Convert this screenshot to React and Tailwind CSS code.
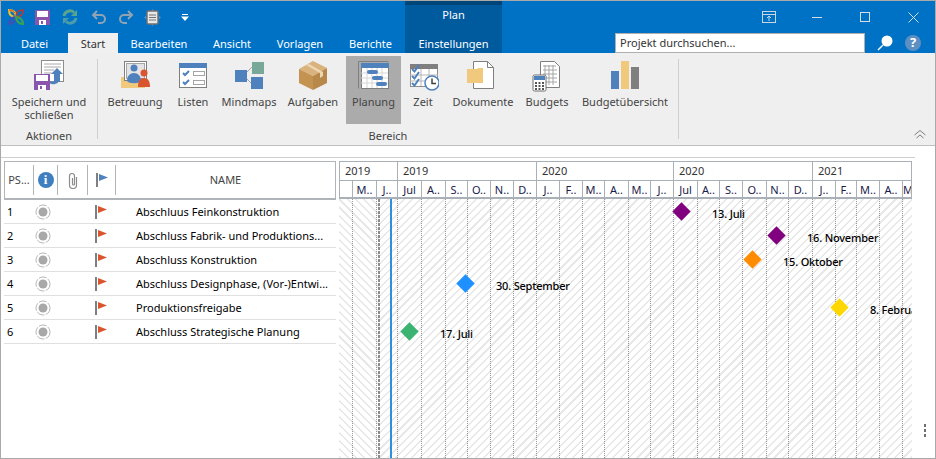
import React from 'react';

const tabs = [
  { label: 'Datei', w: 'w-[67px]' },
  { label: 'Start', w: 'w-[50px]', active: true },
  { label: 'Bearbeiten', w: 'w-[82px]' },
  { label: 'Ansicht', w: 'w-[64px]' },
  { label: 'Vorlagen', w: 'w-[72px]' },
  { label: 'Berichte', w: 'w-[69px]' },
];

const rows = [
  'Abschluus Feinkonstruktion',
  'Abschluss Fabrik- und Produktions...',
  'Abschluss Konstruktion',
  'Abschluss Designphase, (Vor-)Entwi...',
  'Produktionsfreigabe',
  'Abschluss Strategische Planung',
];

const months = ['', 'M..', 'J..', 'Jul', 'A..', 'S..', 'O..', 'N..', 'D..', 'J..', 'F..', 'M..', 'A..', 'M..', 'J..', 'Jul', 'A..', 'S..', 'O..', 'N..', 'D..', 'J..', 'F..', 'M..', 'A..', 'M..'];
const monthCols = 'grid-cols-[13px_24px_21px_24px_24px_22px_23px_23px_23px_23px_23px_22px_24px_22px_23px_24px_22px_23px_24px_22px_24px_23px_21px_23px_23px_10px]';

const milestones = [
  { d: 'left-[336px] top-[6px] bg-[#800080]', l: 'left-[373px] top-[8px]', text: '13. Juli' },
  { d: 'left-[431px] top-[30px] bg-[#800080]', l: 'left-[468px] top-[32px]', text: '16. November' },
  { d: 'left-[407px] top-[54px] bg-[#ff8c00]', l: 'left-[444px] top-[56px]', text: '15. Oktober' },
  { d: 'left-[120px] top-[78px] bg-[#1e90ff]', l: 'left-[157px] top-[80px]', text: '30. September' },
  { d: 'left-[494px] top-[102px] bg-[#ffd700]', l: 'left-[531px] top-[104px]', text: '8. Februar' },
  { d: 'left-[64px] top-[126px] bg-[#3cb371]', l: 'left-[101px] top-[128px]', text: '17. Juli' },
];

const Logo = () => (
  <svg width="18" height="18" viewBox="0 0 18 18" fill="none">
    <path d="M2 2c5 0 7 3 7 7-4 0-7-2-7-7z" stroke="#f2c230" strokeWidth="2" />
    <path d="M2 2c3 0 5 1 6 3" stroke="#d9482b" strokeWidth="1" />
    <path d="M16 2c0 5-3 7-7 7 0-4 2-7 7-7z" stroke="#c0392b" strokeWidth="1.500" />
    <path d="M2 16c0-4 3-7 7-7 0 4-3 7-7 7z" stroke="#3f51b5" strokeWidth="2" />
    <path d="M16 16c-4 0-7-3-7-7 4 0 7 3 7 7z" stroke="#3fa34d" strokeWidth="2" />
  </svg>
);

const SaveSmall = () => (
  <svg width="15" height="15" viewBox="0 0 15 15">
    <rect width="15" height="15" fill="#8a55ad" />
    <rect x="2" y="1" width="11" height="6" fill="#fff" />
    <rect x="4" y="10" width="7" height="5" fill="#fff" />
    <rect x="6" y="11" width="2" height="3" fill="#8a55ad" />
  </svg>
);

const Sync = () => (
  <svg width="16" height="16" viewBox="0 0 16 16" fill="none">
    <path d="M2 7a6 6 0 0 1 10-3.500" stroke="#5aa58c" strokeWidth="3" />
    <path d="M15 1v6H9z" fill="#5aa58c" />
    <path d="M14 9a6 6 0 0 1-10 3.500" stroke="#4d9ca8" strokeWidth="3" />
    <path d="M1 15V9h6z" fill="#4d9ca8" />
  </svg>
);

const Undo = ({ flip }) => (
  <svg width="15" height="14" viewBox="0 0 15 14" fill="none" className={flip ? '-scale-x-100' : ''}>
    <path d="M2 5h8a4 4 0 0 1 0 8H7" stroke="#8fa3b3" strokeWidth="2" />
    <path d="M6 1 2 5l4 4" stroke="#8fa3b3" strokeWidth="2" />
  </svg>
);

const DocSmall = () => (
  <svg width="17" height="17" viewBox="0 0 17 17" fill="none">
    <path d="M0 8.500 2 7v3zM17 8.500 15 7v3zM8.500 0 7 2h3zM8.500 17 7 15h3z" fill="#5a95c8" />
    <rect x="3" y="2" width="11" height="13" rx="1" fill="#e8e8e8" stroke="#707070" strokeWidth="1.500" />
    <path d="M5 6h7M5 8.500h7M5 11h7" stroke="#707070" />
  </svg>
);

const SaveClose = () => (
  <svg width="32" height="32" viewBox="0 0 32 32" fill="none">
    <rect x="8.500" y="0.500" width="22" height="21" fill="#fff" stroke="#8c8c8c" />
    <path d="M11 4h17M11 7h17M11 10h10M11 13h8" stroke="#a8a8a8" />
    <path d="M24 8l6 6h-3v8h-6v-8h-3z" fill="#4f81bd" />
    <path d="M17 22c3 2 7 1 8-2" stroke="#4f81bd" strokeWidth="2.500" />
    <rect x="1" y="14" width="16" height="16" fill="#8a55ad" />
    <rect x="3" y="15" width="12" height="6" fill="#fff" />
    <rect x="5" y="25" width="8" height="5" fill="#fff" />
    <rect x="7" y="26" width="2" height="3" fill="#8a55ad" />
  </svg>
);

const Care = () => (
  <svg width="32" height="32" viewBox="0 0 32 32" fill="none">
    <path d="M2 17h4v-1h20v12H2z" fill="#f0c97c" />
    <rect x="5.500" y="1.500" width="22" height="19" fill="#fff" stroke="#7f7f7f" />
    <rect x="7.500" y="3.500" width="18" height="15" fill="#e4e4e4" stroke="#a5a5a5" />
    <circle cx="15" cy="8" r="3.500" fill="#4f81bd" />
    <path d="M8 21c0-5 3-8 7-8s7 3 7 8c-2 3-12 3-14 0z" fill="#4f81bd" />
    <circle cx="25" cy="13" r="3.500" fill="#d9552f" />
    <path d="M19 27c0-6 2-9 6-9s6 3 6 9z" fill="#d9552f" />
  </svg>
);

const Lists = () => (
  <svg width="32" height="32" viewBox="0 0 32 32" fill="none">
    <rect x="2.500" y="3.500" width="27" height="24" fill="#fff" stroke="#7f7f7f" />
    <rect x="2" y="3" width="28" height="5" fill="#4f81bd" />
    <rect x="16.500" y="11.500" width="11" height="4" stroke="#a5a5a5" />
    <rect x="16.500" y="20.500" width="11" height="4" stroke="#a5a5a5" />
    <path d="M6 13l2 2 4-4M6 22l2 2 4-4" stroke="#4f81bd" strokeWidth="2" />
  </svg>
);

const Mindmap = () => (
  <svg width="32" height="32" viewBox="0 0 32 32" fill="none">
    <path d="M14 12l5-5M14 19l4 4" stroke="#a5a5a5" />
    <rect x="19" y="2" width="12" height="12" fill="#78a898" />
    <rect x="2" y="10" width="12" height="12" fill="#4f81bd" />
    <rect x="18" y="17" width="12" height="12" fill="#4f81bd" />
  </svg>
);

const Box = () => (
  <svg width="32" height="32" viewBox="0 0 32 32">
    <path d="M2 9 16 1l14 7-14 8z" fill="#d9b27c" />
    <path d="M2 9l14 7v14L2 23z" fill="#c49352" />
    <path d="M30 8 16 16v14l14-7z" fill="#b8874a" />
    <path d="m9 5 14 8v5l3-2v-4L12 4z" fill="#ecd7b4" />
  </svg>
);

const Gantt = () => (
  <svg width="32" height="32" viewBox="0 0 32 32" fill="none">
    <path d="M.500 28.500V1.500h30" stroke="#7f7f7f" />
    <rect x="3.500" y="3.500" width="27" height="25" fill="#fff" stroke="#7f7f7f" />
    <path d="M9 8v20M14 8v20M19 8v20M24 8v20M3 13h27M3 18h27M3 23h27" stroke="#d5d5d5" />
    <rect x="3" y="3" width="28" height="5" fill="#4f81bd" />
    <rect x="9" y="10" width="11" height="4" rx="2" fill="#4f81bd" />
    <rect x="14" y="16" width="11" height="4" rx="2" fill="#4f81bd" />
    <rect x="18" y="22" width="11" height="4" rx="2" fill="#4f81bd" />
  </svg>
);

const Time = () => (
  <svg width="32" height="32" viewBox="0 0 32 32" fill="none">
    <rect x="3.500" y="4.500" width="27" height="22" fill="#fff" stroke="#8c8c8c" />
    <rect x="3" y="4" width="28" height="5" fill="#7f7f7f" />
    <path d="M14 9v17M22 9v17M3 15h28M3 21h28" stroke="#b5b5b5" />
    <path d="M5 9l2.500 2.500L12 5M5 16l2.500 2.500L12 12M5 23l2.500 2.500L12 19" stroke="#4f81bd" strokeWidth="2" />
    <circle cx="25" cy="23" r="7" fill="#fff" stroke="#4f81bd" strokeWidth="1.500" />
    <path d="M25 18.500V23.500h4" stroke="#404040" strokeWidth="1.500" />
  </svg>
);

const Docs = () => (
  <svg width="32" height="32" viewBox="0 0 32 32" fill="none">
    <path d="M6.500 1.500h14l6 6v21h-20z" fill="#fff" stroke="#7f7f7f" />
    <path d="M20.500 1.500v6h6" stroke="#7f7f7f" />
    <path d="M0 9h10l1-1h5v15H0z" fill="#f0c97c" />
  </svg>
);

const Budget = () => (
  <svg width="32" height="32" viewBox="0 0 32 32" fill="none">
    <path d="M9.500 1.500h14l5 5v21h-19z" fill="#fff" stroke="#7f7f7f" />
    <path d="M12 6h13M12 10h14M12 14h14M12 18h14M12 22h14M14 5v20M18 5v20M22 5v20" stroke="#a5a5a5" />
    <rect x="2" y="15" width="13" height="16" rx="1.500" fill="#fff" stroke="#6e6e6e" />
    <rect x="3" y="16" width="11" height="4" fill="#4f81bd" />
    <path d="M4 23h2M7.500 23h2M11 23h2M4 26h2M7.500 26h2M11 26h2M4 29h2M7.500 29h2M11 29h2" stroke="#555" strokeWidth="2" />
  </svg>
);

const Bars = () => (
  <svg width="32" height="32" viewBox="0 0 32 32">
    <rect x="2" y="11" width="8" height="18" fill="#4f81bd" />
    <rect x="12" y="1" width="8" height="28" fill="#f0c97c" />
    <rect x="22" y="7" width="8" height="22" fill="#7f7f7f" />
  </svg>
);

const buttons = [
  { label: 'Betreuung', icon: Care, cls: 'w-[62px] ml-[6px]' },
  { label: 'Listen', icon: Lists, cls: 'w-[52px] ml-[1px]' },
  { label: 'Mindmaps', icon: Mindmap, cls: 'w-[60px]' },
  { label: 'Aufgaben', icon: Box, cls: 'w-[58px] ml-[5px]' },
  { label: 'Planung', icon: Gantt, cls: 'w-[55px] ml-[4px] bg-[#ababab]' },
  { label: 'Zeit', icon: Time, cls: 'w-[44px]' },
  { label: 'Dokumente', icon: Docs, cls: 'w-[64px] ml-[6px]' },
  { label: 'Budgets', icon: Budget, cls: 'w-[52px] ml-[6px]' },
  { label: 'Budgetübersicht', icon: Bars, cls: 'w-[94px] ml-[5px]' },
];

const RibbonButton = ({ label, icon: Icon, cls }) => (
  <div className={`h-[68px] shrink-0 flex flex-col items-center pt-[4px] ${cls}`}>
    <Icon />
    <div className="mt-[3px] leading-[13px] text-center whitespace-pre">{label}</div>
  </div>
);

const Radio = () => (
  <svg width="16" height="16" viewBox="0 0 16 16" fill="none">
    <circle cx="8" cy="8" r="7" stroke="#b5b5b5" strokeDasharray="8 1.500" />
    <circle cx="8" cy="8" r="4.500" fill="#a8a8a8" />
  </svg>
);

const Flag = ({ color }) => (
  <svg width="14" height="15" viewBox="0 0 14 15">
    <rect x="0" y="0" width="2" height="14" fill="#7f7f7f" />
    <path d="M3 1l9 3.500L3 8z" fill={color} />
  </svg>
);

export default function App() {
  return (
    <div className="w-[936px] h-[459px] flex flex-col overflow-hidden border border-[#a9a9a9] bg-white text-[11px] text-[#444] font-['Noto_Sans','Liberation_Sans',sans-serif]">
      {/* title bar + tabs */}
      <div className="flex h-[52px] shrink-0 bg-[#0072c6] text-white">
        <div className="w-[404px] shrink-0 flex flex-col">
          <div className="h-[32px] flex items-center pl-[6px]">
            <div className="w-[26px]"><Logo /></div>
            <div className="w-[28px] pl-[2px]"><SaveSmall /></div>
            <div className="w-[28px] pl-[1px]"><Sync /></div>
            <div className="w-[28px] pl-[2px]"><Undo /></div>
            <div className="w-[27px] pl-[2px]"><Undo flip /></div>
            <div className="w-[37px]"><DocSmall /></div>
            <svg width="8" height="7" viewBox="0 0 8 7" fill="#fff"><path d="M1 0h6v1H1zM0 2.500h8L4 7z" /></svg>
          </div>
          <div className="h-[20px] flex">
            {tabs.map(t => (
              <div
                key={t.label}
                className={`flex justify-center pt-[3px] ${t.w} ${t.active ? 'bg-[#f0f0f0] text-[#333]' : ''}`}
              >
                {t.label}
              </div>
            ))}
          </div>
        </div>

        <div className="w-[97px] shrink-0 flex flex-col items-center bg-[#005a9e] border-t-4 border-[#004578]">
          <div className="h-[28px] pt-[2px]">Plan</div>
          <div className="pt-[3px]">Einstellungen</div>
        </div>

        <div className="flex-1 flex flex-col">
          <div className="h-[32px] flex items-center pl-[260px]">
            <svg width="14" height="13" viewBox="0 0 14 13" fill="none" stroke="#c8d6e2">
              <rect x=".5" y=".5" width="13" height="11" />
              <path d="M0 3.500h14M7 10V5M5 7l2-2 2 2" />
            </svg>
            <div className="ml-[36px] w-[10px] h-px bg-[#d5dee6]" />
            <div className="ml-[38px] w-[10px] h-[10px] border border-[#d5dee6]" />
            <svg className="ml-[38px]" width="11" height="11" viewBox="0 0 11 11" stroke="#d5dee6"><path d="M.5.5l10 10M10.500.500l-10 10" /></svg>
          </div>
          <div className="h-[20px] flex items-center pl-[113px]">
            <div className="w-[250px] h-[20px] bg-white border border-[#b0b0b0] pl-[4px] leading-[17px] text-[#333]">Projekt durchsuchen...</div>
            <svg className="ml-[12px]" width="16" height="18" viewBox="0 0 16 18" fill="none">
              <circle cx="10" cy="7" r="5.500" fill="#fff" />
              <path d="M6 11l-5 5" stroke="#fff" strokeWidth="1.500" />
            </svg>
            <div className="ml-[12px] w-[16px] h-[16px] rounded-full bg-[#5d8fc2] flex items-center justify-center font-bold text-[13px] text-white">?</div>
          </div>
        </div>
      </div>

      {/* ribbon */}
      <div className="flex h-[93px] shrink-0 bg-[#efefef] border-b border-[#bfbfbf]">
        <div className="w-[96px] shrink-0 flex flex-col items-center pt-[3px]">
          <RibbonButton label={'Speichern und\nschließen'} icon={SaveClose} cls="w-[90px]" />
          <div className="mt-[5px] leading-[14px]">Aktionen</div>
        </div>
        <div className="w-px h-[80px] mt-[6px] bg-[#d0d0d0]" />
        <div className="w-[580px] shrink-0 flex flex-col pt-[3px]">
          <div className="flex">
            {buttons.map(b => <RibbonButton key={b.label} {...b} />)}
          </div>
          <div className="mt-[5px] text-center leading-[14px]">Bereich</div>
        </div>
        <div className="w-px h-[80px] mt-[6px] bg-[#d0d0d0]" />
        <div className="flex-1 flex items-end justify-end pr-[9px] pb-[6px]">
          <svg width="12" height="9" viewBox="0 0 12 9" fill="none" stroke="#7f7f7f"><path d="M.5 5 6 .5 11.500 5M2.500 8 6 5l3.500 3" /></svg>
        </div>
      </div>

      <div className="h-[11px] shrink-0" />
      <div className="h-px w-[914px] shrink-0 bg-[#cfcfcf]" />

      {/* table + chart */}
      <div className="flex-1 min-h-0 flex pt-[3px] pl-[3px]">
        <div className="w-[332px] shrink-0 mr-[3px]">
          <div className="h-[39px] flex items-stretch border border-b-2 border-[#b0b4b8] text-[#444]">
            <div className="w-[29px] my-[3px] border-r border-[#b0b4b8] flex items-center justify-center">PS...</div>
            <div className="w-[24px] my-[3px] border-r border-[#b0b4b8] flex items-center justify-center">
              <div className="w-[16px] h-[16px] rounded-full bg-[#3f7fbf] flex items-center justify-center font-bold text-[13px] text-white font-['Liberation_Serif',serif]">i</div>
            </div>
            <div className="w-[30px] my-[3px] border-r border-[#b0b4b8] flex items-center justify-center">
              <svg width="10" height="17" viewBox="0 0 10 17" fill="none" stroke="#8c8c8c" strokeWidth="1.200">
                <path d="M8.500 5v8a3.500 3.500 0 0 1-7 0V4a2.500 2.500 0 0 1 5 0v8a1 1 0 0 1-2 0V6" />
              </svg>
            </div>
            <div className="w-[28px] my-[3px] border-r border-[#b0b4b8] flex items-center pl-[8px]"><Flag color="#4f81bd" /></div>
            <div className="flex-1 flex items-center justify-center">NAME</div>
          </div>
          {rows.map((name, i) => (
            <div key={name} className="h-[24px] flex items-center pt-[1px] border-b border-[#e0e0e0] text-black">
              <div className="w-[31px] pl-[3px]">{i + 1}</div>
              <div className="w-[60px]"><Radio /></div>
              <div className="w-[41px]"><Flag color="#d9552f" /></div>
              <div className="flex-1 whitespace-nowrap">{name}</div>
            </div>
          ))}
        </div>

        <div className="w-[573px] shrink-0 flex flex-col">
          <div className="grid grid-cols-[58px_139px_137px_139px_100px] h-[19px] border-t border-r border-[#a9b0b8] text-[#333]">
            {['2019', '2019', '2020', '2020', '2021'].map((y, i) => (
              <div key={i} className="pl-[5px] border-l border-b border-[#a9b0b8] leading-[18px]">{y}</div>
            ))}
          </div>
          <div className={`grid h-[19px] overflow-hidden border-b-2 border-r border-[#a9b0b8] text-[#1a1a4a] ${monthCols}`}>
            {months.map((m, i) => (
              <div key={i} className="border-l border-[#a9b0b8] text-center leading-[19px] whitespace-nowrap overflow-hidden">{m}</div>
            ))}
          </div>
          <div className="relative flex-1 min-h-0 overflow-hidden flex">
            <div className="w-[40px] shrink-0 bg-[repeating-linear-gradient(45deg,#e8e8e8_0,#e8e8e8_1.5px,transparent_1.5px,transparent_5.7px)]" />
            <div className="flex-1 bg-[repeating-linear-gradient(135deg,#e8e8e8_0,#e8e8e8_1.5px,transparent_1.5px,transparent_5.7px)]" />
            <div className={`absolute inset-0 grid ${monthCols}`}>
              {months.map((m, i) => (
                <div key={i} className={i === 0 ? '' : 'border-l border-dotted border-[#999]'} />
              ))}
            </div>
            <div className="absolute left-[39px] top-0 bottom-0 w-[2px] bg-[repeating-linear-gradient(180deg,#8c8c8c_0,#8c8c8c_3px,transparent_3px,transparent_4px)]" />
            <div className="absolute left-[51px] top-0 bottom-0 w-[2px] bg-[#2e8fdf]" />
            {milestones.map(m => (
              <React.Fragment key={m.text}>
                <div className={`absolute w-[13px] h-[13px] rotate-45 ${m.d}`} />
                <div className={`absolute font-medium leading-[14px] tracking-[-0.2px] whitespace-nowrap text-black ${m.l}`}>{m.text}</div>
              </React.Fragment>
            ))}
          </div>
        </div>

        <div className="flex-1 flex flex-col items-center justify-end gap-[2px] pb-[21px] pl-[3px]">
          <div className="w-[2px] h-[3px] bg-[#707070]" />
          <div className="w-[2px] h-[3px] bg-[#707070]" />
          <div className="w-[2px] h-[3px] bg-[#707070]" />
        </div>
      </div>
    </div>
  );
}
